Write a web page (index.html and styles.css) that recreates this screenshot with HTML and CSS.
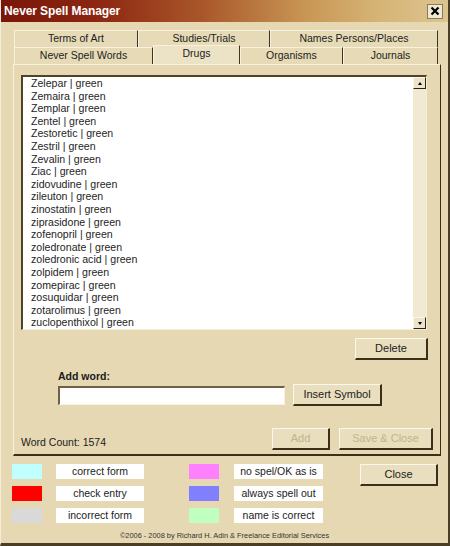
FILE: index.html
```html
<!DOCTYPE html>
<html>
<head>
<meta charset="utf-8">
<title>Never Spell Manager</title>
<link rel="stylesheet" href="styles.css">
</head>
<body>
<div class="window">
  <div class="titlebar">
    <span class="title">Never Spell Manager</span>
    <span class="xbtn"><svg width="10" height="10" viewBox="0 0 10 10"><path d="M1.5 1.5 L8.5 8.5 M8.5 1.5 L1.5 8.5" stroke="#000" stroke-width="2.2" fill="none"/></svg></span>
  </div>

  <div class="tabs">
    <div class="tabrow">
      <div class="tab t-terms">Terms of Art</div>
      <div class="tab t-studies">Studies/Trials</div>
      <div class="tab t-names">Names Persons/Places</div>
    </div>
    <div class="tabrow">
      <div class="tab t-never">Never Spell Words</div>
      <div class="tab t-drugs selected">Drugs</div>
      <div class="tab t-org">Organisms</div>
      <div class="tab t-journals">Journals</div>
    </div>
  </div>

  <div class="panel">
    <div class="listbox">
      <ul class="items">
        <li>Zelepar | green</li>
        <li>Zemaira | green</li>
        <li>Zemplar | green</li>
        <li>Zentel | green</li>
        <li>Zestoretic | green</li>
        <li>Zestril | green</li>
        <li>Zevalin | green</li>
        <li>Ziac | green</li>
        <li>zidovudine | green</li>
        <li>zileuton | green</li>
        <li>zinostatin | green</li>
        <li>ziprasidone | green</li>
        <li>zofenopril | green</li>
        <li>zoledronate | green</li>
        <li>zoledronic acid | green</li>
        <li>zolpidem | green</li>
        <li>zomepirac | green</li>
        <li>zosuquidar | green</li>
        <li>zotarolimus | green</li>
        <li>zuclopenthixol | green</li>
        <li>Zyprexa | green</li>
      </ul>
      <div class="scrollbar">
        <div class="sbtn"><span class="tri up"></span></div>
        <div class="track"></div>
        <div class="sbtn"><span class="tri down"></span></div>
      </div>
    </div>

    <div class="delete-row"><div class="btn btn-delete">Delete</div></div>

    <div class="addword">
      <div class="addlabel">Add word:</div>
      <div class="addrow">
        <div class="textinput"></div>
        <div class="btn btn-insert">Insert Symbol</div>
      </div>
    </div>

    <div class="bottomrow">
      <span class="count">Word Count: 1574</span>
      <div class="btn disabled btn-add">Add</div>
      <div class="btn disabled btn-save">Save &amp; Close</div>
    </div>
  </div>

  <div class="legend">
    <div class="legend-rows">
      <div class="lrow">
        <span class="sw sw-cyan"></span><span class="lbl">correct form</span>
        <span class="sw sw2 sw-pink"></span><span class="lbl lbl2">no spel/OK as is</span>
      </div>
      <div class="lrow">
        <span class="sw sw-red"></span><span class="lbl">check entry</span>
        <span class="sw sw2 sw-blue"></span><span class="lbl lbl2">always spell out</span>
      </div>
      <div class="lrow">
        <span class="sw sw-grey"></span><span class="lbl">incorrect form</span>
        <span class="sw sw2 sw-green"></span><span class="lbl lbl2">name is correct</span>
      </div>
    </div>
    <div class="btn btn-close">Close</div>
  </div>

  <div class="footer">©2006 - 2008 by Richard H. Adin &amp; Freelance Editorial Services</div>
</div>
</body>
</html>
```

FILE: styles.css
```css
html, body {
  margin: 0;
  padding: 0;
  background: #e5d8b2;
}

body {
  font-family: "Liberation Sans", Arial, sans-serif;
  color: #1c1c1c;
}

.window {
  width: 450px;
  height: 546px;
  box-sizing: border-box;
  background: #e5d8b2;
  border-left: 1px solid #f3ecd6;
  border-right: 2px solid #4a3e26;
  border-bottom: 3px solid #4a3e26;
  display: flex;
  flex-direction: column;
  overflow: hidden;
}

/* title bar */
.titlebar {
  height: 22px;
  flex: none;
  display: flex;
  align-items: center;
  justify-content: space-between;
  padding: 0 5px 0 3px;
  background: linear-gradient(to right, #7a1609 0%, #8d2712 22%, #a9572a 45%, #c89654 68%, #d6b577 85%, #dcc48f 100%);
}

.title {
  color: #ffffff;
  font-weight: bold;
  font-size: 12px;
  letter-spacing: -0.1px;
}

.xbtn {
  width: 16px;
  height: 15px;
  box-sizing: border-box;
  background: #efe8d4;
  border: 1px solid #8a7a5a;
  display: flex;
  align-items: center;
  justify-content: center;
}

/* tabs */
.tabs {
  margin: 8px 0 0 13px;
  flex: none;
}

.tabrow {
  display: flex;
  height: 17px;
}

.tab {
  height: 17px;
  box-sizing: border-box;
  background: #e7dbb7;
  border-top: 1px solid #f7f1de;
  border-left: 1px solid #f7f1de;
  border-right: 1px solid #3f3420;
  font-size: 10.5px;
  line-height: 15px;
  text-align: center;
  color: #222;
}

.t-terms { width: 124px; }
.t-studies { width: 132px; }
.t-names { width: 168px; }
.t-never { width: 139px; }
.t-drugs { width: 87px; }
.t-org { width: 103px; }
.t-journals { width: 95px; }

.tab.selected {
  background: #ece3c6;
  height: 19px;
  margin-top: -2px;
  line-height: 15px;
  position: relative;
  z-index: 1;
}

/* panel */
.panel {
  margin-left: 12px;
  width: 428px;
  height: 392px;
  flex: none;
  box-sizing: border-box;
  border-top: 1px solid #f7f1de;
  border-left: 1px solid #f7f1de;
  border-right: 1px solid #3a2f1a;
  border-bottom: 2px solid #3a2f1a;
  padding: 10px 0 0 7px;
  display: flex;
  flex-direction: column;
}

.listbox {
  width: 406px;
  height: 255px;
  box-sizing: border-box;
  background: #ffffff;
  border-top: 2px solid #4e4228;
  border-left: 2px solid #4e4228;
  border-right: 1px solid #f4eed8;
  border-bottom: 1px solid #f4eed8;
  display: flex;
  overflow: hidden;
}

.items {
  flex: 1;
  list-style: none;
  margin: 0;
  padding: 0 0 0 8px;
  font-size: 10.6px;
  line-height: 12.6px;
  color: #1e1e1e;
  overflow: hidden;
}

.scrollbar {
  width: 13px;
  flex: none;
  display: flex;
  flex-direction: column;
  background: #f1e9d2;
}

.sbtn {
  height: 12px;
  box-sizing: border-box;
  background: #ece3c8;
  border-top: 1px solid #faf6ea;
  border-left: 1px solid #faf6ea;
  border-right: 1px solid #2a2418;
  border-bottom: 1px solid #2a2418;
  display: flex;
  align-items: center;
  justify-content: center;
}

.track {
  flex: 1;
}

.tri {
  width: 0;
  height: 0;
  border-left: 2px solid transparent;
  border-right: 2px solid transparent;
}

.tri.up { border-bottom: 3px solid #000; }
.tri.down { border-top: 3px solid #000; }

/* buttons */
.btn {
  box-sizing: border-box;
  height: 22px;
  background: #e9debd;
  border-top: 1px solid #fbf7ea;
  border-left: 1px solid #fbf7ea;
  border-right: 2px solid #3b2f1a;
  border-bottom: 2px solid #3b2f1a;
  font-size: 11px;
  line-height: 19px;
  text-align: center;
  color: #222;
}

.btn.disabled {
  color: #c3b48c;
}

.delete-row {
  width: 407px;
  margin-top: 8px;
  display: flex;
  justify-content: flex-end;
}

.btn-delete { width: 73px; }

.addword {
  margin: 10px 0 0 37px;
}

.addlabel {
  font-weight: bold;
  font-size: 10.5px;
  line-height: 13px;
  height: 13px;
}

.addrow {
  margin-top: 1px;
  display: flex;
  align-items: center;
  gap: 8px;
}

.textinput {
  width: 227px;
  height: 19px;
  box-sizing: border-box;
  background: #ffffff;
  border-top: 2px solid #6e6244;
  border-left: 2px solid #6e6244;
  border-right: 1px solid #f6f1df;
  border-bottom: 1px solid #f6f1df;
}

.btn-insert { width: 89px; }

.bottomrow {
  margin-top: 22px;
  width: 412px;
  display: flex;
  align-items: center;
}

.count {
  flex: 1;
  font-size: 10.5px;
  padding-top: 6px;
  color: #222;
}

.btn-add { width: 58px; }
.btn-save { width: 94px; margin-left: 9px; }

/* legend */
.legend {
  margin: 8px 0 0 11px;
  display: flex;
  align-items: flex-start;
}

.legend-rows {
  display: flex;
  flex-direction: column;
  gap: 7px;
}

.lrow {
  display: flex;
  height: 15px;
}

.sw {
  width: 30px;
  height: 15px;
}

.sw2 { margin-left: 45px; }

.sw-cyan { background: #c0ffff; }
.sw-red { background: #ff0000; }
.sw-grey { background: #d9d9d9; }
.sw-pink { background: #ff80ff; }
.sw-blue { background: #8080ff; }
.sw-green { background: #c0ffc0; }

.lbl {
  width: 88px;
  margin-left: 14px;
  height: 15px;
  background: #ffffff;
  font-size: 10.5px;
  line-height: 15px;
  text-align: center;
  color: #222;
}

.lbl2 {
  width: 89px;
  margin-left: 15px;
}

.btn-close {
  width: 78px;
  margin-left: 37px;
  font-size: 11px;
}

.footer {
  margin-top: 8px;
  text-align: center;
  font-size: 7.4px;
  color: #333;
}
```
